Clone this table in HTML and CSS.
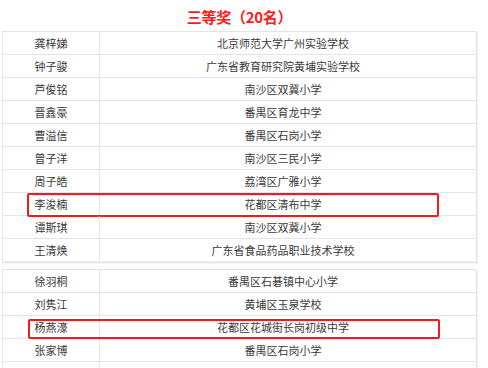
FILE: index.html
```html
<!DOCTYPE html>
<html lang="zh">
<head>
<meta charset="utf-8">
<link rel="stylesheet" href="styles.css">
</head>
<body>
<div class="page">
  <div class="title">三等奖（20名）</div>
  <div class="table">
    <div class="row"><div class="name">龚梓娣</div><div class="school">北京师范大学广州实验学校</div></div>
    <div class="row"><div class="name">钟子骏</div><div class="school">广东省教育研究院黄埔实验学校</div></div>
    <div class="row"><div class="name">芦俊铭</div><div class="school">南沙区双冀小学</div></div>
    <div class="row"><div class="name">晋鑫豪</div><div class="school">番禺区育龙中学</div></div>
    <div class="row"><div class="name">曹溢信</div><div class="school">番禺区石岗小学</div></div>
    <div class="row"><div class="name">曾子洋</div><div class="school">南沙区三民小学</div></div>
    <div class="row"><div class="name">周子皓</div><div class="school">荔湾区广雅小学</div></div>
    <div class="row mark mark-a"><div class="name">李浚楠</div><div class="school">花都区清布中学</div></div>
    <div class="row"><div class="name">谭斯琪</div><div class="school">南沙区双冀小学</div></div>
    <div class="row"><div class="name">王清焕</div><div class="school">广东省食品药品职业技术学校</div></div>
  </div>
  <div class="table">
    <div class="row"><div class="name">徐羽桐</div><div class="school">番禺区石碁镇中心小学</div></div>
    <div class="row"><div class="name">刘隽江</div><div class="school">黄埔区玉泉学校</div></div>
    <div class="row mark mark-b"><div class="name">杨燕濠</div><div class="school">花都区花城街长岗初级中学</div></div>
    <div class="row"><div class="name">张家博</div><div class="school">番禺区石岗小学</div></div>
    <div class="row"><div class="name"></div><div class="school"></div></div>
  </div>
</div>
</body>
</html>
```
FILE: styles.css
```css
html, body {
  margin: 0;
  padding: 0;
  background: #ffffff;
  overflow: hidden;
}
body {
  font-family: "Microsoft YaHei", "Noto Sans CJK SC", "Noto Sans", sans-serif;
  color: #3a3a3a;
}
.page {
  width: 488px;
  height: 368px;
  padding-left: 2px;
  box-sizing: border-box;
}
.title {
  width: 475px;
  height: 31px;
  line-height: 34px;
  text-align: center;
  color: #ff1a1a;
  font-size: 15px;
  font-weight: bold;
  letter-spacing: -0.3px;
}
.table {
  width: 475px;
  box-sizing: border-box;
  border: 1px solid #e4e4e4;
  border-bottom: 2px solid #ebebeb;
  box-shadow: 1px 1px 1px rgba(0,0,0,0.05);
  margin-bottom: 6px;
}
.row {
  display: grid;
  grid-template-columns: 97px 1fr;
  height: 23px;
  box-sizing: border-box;
  border-bottom: 1px solid #e4e4e4;
  font-size: 11px;
  line-height: 22px;
  position: relative;
}
.row:last-child {
  border-bottom: none;
  height: 22px;
}
.name {
  text-align: center;
  border-right: 1px solid #e4e4e4;
}
.school {
  text-align: center;
  padding-right: 10px;
}
.mark::after {
  content: "";
  position: absolute;
  border: 2px solid #f21b1b;
  border-radius: 2px;
  pointer-events: none;
}
.mark-a::after {
  left: 24px;
  top: 0px;
  width: 408px;
  height: 20px;
}
.mark-b::after {
  left: 25px;
  top: 3px;
  width: 408px;
  height: 16px;
}
```
